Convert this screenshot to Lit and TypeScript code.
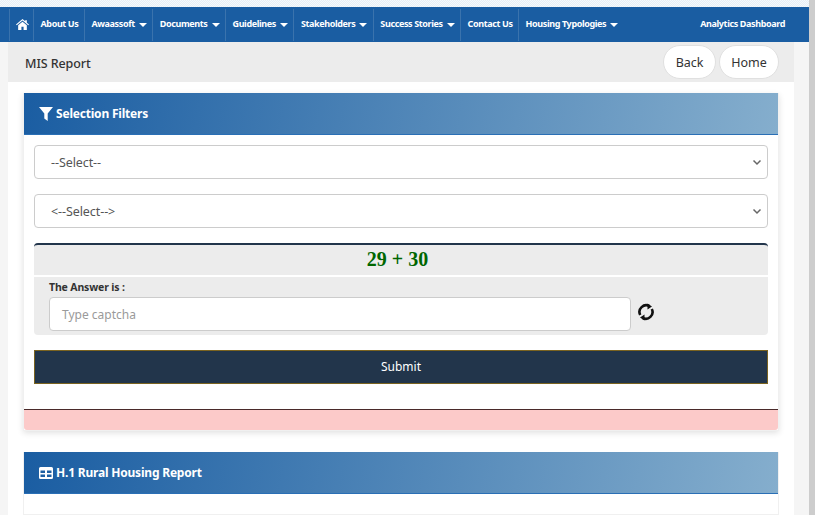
import { LitElement, html, css, svg } from "lit";
import { customElement } from "lit/decorators.js";

const caret = html`<svg class="caret" viewBox="0 0 8 4" width="8" height="4"><path d="M0 0h8L4 4z" fill="currentColor"/></svg>`;

const navItems: [string, boolean][] = [
  ["About Us", false],
  ["Awaassoft", true],
  ["Documents", true],
  ["Guidelines", true],
  ["Stakeholders", true],
  ["Success Stories", true],
  ["Contact Us", false],
  ["Housing Typologies", true],
];

@customElement("app-root")
export class AppRoot extends LitElement {
  static styles = css`
    :host { display: block; width: 815px; height: 515px; overflow: hidden; font-family: "Noto Sans", "Open Sans", sans-serif; color: #212529; background: #f5f5f5; }
    * { box-sizing: border-box; }
    .frame { display: flex; height: 515px; }
    .page { width: 809px; flex: none; display: flex; flex-direction: column; }
    .scrollbar { flex: 1; background: #cdcdcd; }
    .strip { height: 7px; flex: none; background: repeating-conic-gradient(#e6eef6 0 25%, #f6f9fb 0 50%) 0 0 / 2px 2px; }
    nav { height: 35px; flex: none; background: #1a5da2; color: #fff; display: flex; align-items: center; padding-left: 9px; font-size: 9px; letter-spacing: -0.38px; font-weight: 700; }
    .item { height: 32px; display: flex; align-items: center; gap: 4px; padding: 0 5.5px 2px 6.5px; border-left: 1px solid #3a73ad; white-space: nowrap; }
    .item.home { padding: 0 0 1px 1px; width: 24px; justify-content: center; }
    .item.last { border: 0; margin-left: auto; padding-right: 24px; }
    .caret { flex: none; margin-top: 3px; }
    .wrap { flex: 1; margin: 0 15px 0 8px; background: #fff; display: flex; flex-direction: column; min-height: 0; }
    .title { height: 40px; flex: none; background: #ececec; display: flex; align-items: center; justify-content: space-between; padding: 0 15px 0 17px; font-size: 12.5px; letter-spacing: -0.1px; font-weight: 500; color: #333; }
    .title > span { margin-top: 2px; }
    .btns { display: flex; gap: 3px; }
    .btn { height: 34px; border-radius: 17px; background: #fff; border: 1px solid #e0e0e0; display: flex; align-items: center; justify-content: center; font-size: 12.5px; letter-spacing: -0.05px; font-weight: 400; color: #333; }
    .btn.back { width: 53px; }
    .btn.homeb { width: 60px; }
    .panel { margin: 11px 15px 0; box-shadow: 0 2px 6px rgba(0,0,0,.12); background: #fff; display: flex; flex-direction: column; border: 1px solid #f0f0f0; border-width: 0 1px 1px; }
    .head { height: 42px; flex: none; background: linear-gradient(100deg, #1a5da2 0%, #85aecd 100%); border-bottom: 1px solid #2a6fb5; color: #fff; display: flex; align-items: center; gap: 3px; padding-left: 15px; font-size: 12px; letter-spacing: -0.2px; font-weight: 700; }
    .body { padding: 10px 10px 25px; display: flex; flex-direction: column; }
    .sel { height: 34px; border: 1px solid #ccc; border-radius: 4px; background: #fff; display: flex; align-items: center; justify-content: space-between; padding: 0 4px 0 16px; font-size: 12.5px; letter-spacing: -0.08px; color: #555; margin-bottom: 15px; }
    .cap { height: 32px; background: #ececec; border-top: 2px solid #22354b; border-radius: 4px 4px 0 0; display: flex; align-items: center; justify-content: center; padding: 0 7px 2px 0; font-family: "Liberation Serif", serif; font-weight: 700; font-size: 20px; color: #060; }
    .ans { margin-top: 2px; height: 58px; background: #ececec; border-radius: 0 0 4px 4px; padding: 3px 15px 0; display: flex; flex-direction: column; }
    .ans label { font-size: 10.5px; letter-spacing: -0.15px; font-weight: 700; line-height: 14px; color: #333; }
    .row { display: flex; align-items: center; gap: 6px; margin-top: 3px; }
    .row svg { margin-bottom: 4px; }
    .input { width: 582px; height: 34px; border: 1px solid #ccc; border-radius: 4px; background: #fff; display: flex; align-items: center; padding: 0 12px; font-size: 12px; color: #9a9a9a; }
    .submit { margin-top: 15px; height: 34px; background: #22354b; border: 1px solid #7a6320; color: #fff; display: flex; align-items: center; justify-content: center; font-size: 12px; padding-bottom: 2px; }
    .alert { height: 21px; background: #fccac9; border-top: 1px solid #4a2a2a; border-radius: 0 0 3px 3px; }
    .panel.second { margin-top: 21px; flex: 1; box-shadow: none; }
  `;

  render() {
    return html`<div class="frame">
      <div class="page">
        <div class="strip"></div>
        <nav>
          <div class="item home"><svg width="13" height="11" viewBox="0 0 12 10"><path fill="currentColor" d="M6 0 0 5l.7.8L6 1.400l5.300 4.400.7-.8-2-1.700V1H8.500v1L6 0zM6 2.400 2 5.700V10h3V7h2v3h3V5.700z"/></svg></div>
          ${navItems.map(([t, c]) => html`<div class="item">${t}${c ? caret : ""}</div>`)}
          <div class="item last">Analytics Dashboard</div>
        </nav>
        <div class="wrap">
          <div class="title"><span>MIS Report</span><div class="btns"><div class="btn back">Back</div><div class="btn homeb">Home</div></div></div>
          <div class="panel">
            <div class="head">
              <svg width="14" height="14" viewBox="0 0 14 14"><path fill="currentColor" d="M0 0h14L8.700 6.500V14L5.300 11.500V6.500z"/></svg>
              Selection Filters
            </div>
            <div class="body">
              <div class="sel"><span>--Select--</span>${this.chev()}</div>
              <div class="sel"><span>&lt;--Select--&gt;</span>${this.chev()}</div>
              <div class="cap">29 + 30</div>
              <div class="ans">
                <label>The Answer is :</label>
                <div class="row">
                  <div class="input">Type captcha</div>
                  <svg width="18" height="18" viewBox="0 0 18 18" fill="none" stroke="#111" stroke-width="2.600"><path d="M3.200 12A6.700 6.700 0 0 1 12.500 3.200"/><path d="M14.800 6A6.700 6.700 0 0 1 5.500 14.800"/><path fill="#111" stroke="none" d="M10.500 0.500 15 3.500l-4.500 3zM7.500 11.500v6L3 14.500z"/></svg>
                </div>
              </div>
              <div class="submit">Submit</div>
            </div>
            <div class="alert"></div>
          </div>
          <div class="panel second">
            <div class="head">
              <svg width="14" height="12" viewBox="0 0 14 12"><path fill="currentColor" fill-rule="evenodd" d="M1.500 0h11A1.500 1.500 0 0 1 14 1.500v9a1.500 1.500 0 0 1-1.500 1.500h-11A1.500 1.500 0 0 1 0 10.500v-9A1.500 1.500 0 0 1 1.500 0zM1.500 3.500v2.500h4.500V3.500zM8 3.500v2.500h4.500V3.500zM1.500 7.500V10h4.500V7.500zM8 7.500V10h4.500V7.500z"/></svg>
              H.1 Rural Housing Report
            </div>
          </div>
        </div>
      </div>
      <div class="scrollbar"></div>
    </div>`;
  }

  chev() {
    return html`<svg width="12" height="12" viewBox="0 0 12 12" fill="none" stroke="#666" stroke-width="1.500">${svg`<path d="M2.500 4.500 6 8l3.500-3.500"/>`}</svg>`;
  }
}
